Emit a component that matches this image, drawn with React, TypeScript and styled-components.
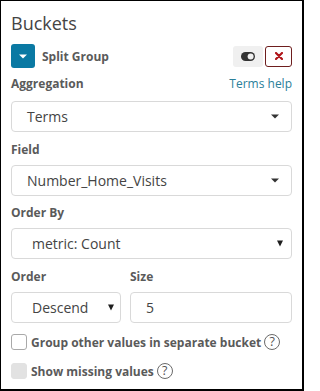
import React from "react";
import styled, { createGlobalStyle } from "styled-components";

const GlobalStyle = createGlobalStyle`
  html, body {
    margin: 0;
    padding: 0;
    background: #fff;
  }
  body {
    font-family: "Open Sans", "Liberation Sans", sans-serif;
  }
`;

const Frame = styled.div`
  box-sizing: border-box;
  width: 304px;
  height: 391px;
  border-style: solid;
  border-color: #000;
  border-width: 1px 2px 2px 1px;
  padding: 10px 10px 0 10px;
  background: #fff;
  color: #444;
`;

const Title = styled.h2`
  margin: 0 0 9px 0;
  font-size: 18px;
  line-height: 24px;
  font-weight: 400;
  color: #444;
`;

const GroupHeader = styled.div`
  display: flex;
  align-items: center;
  height: 24px;
  margin-bottom: 8px;
`;

const CollapseButton = styled.button`
  width: 24px;
  height: 24px;
  padding: 0;
  margin-right: 7px;
  border: 0;
  border-radius: 3px;
  background: #0a79a3;
  display: flex;
  align-items: center;
  justify-content: center;
`;

const GroupName = styled.span`
  flex: 1;
  font-size: 12px;
  font-weight: 700;
  color: #5a5a5a;
`;

const HeaderActions = styled.div`
  display: flex;
  gap: 2px;
`;

const ToggleButton = styled.button`
  width: 30px;
  height: 21px;
  padding: 0;
  border: 0;
  border-radius: 3px;
  background: #f0f0f0;
  display: flex;
  align-items: center;
  justify-content: center;
`;

const DeleteButton = styled.button`
  box-sizing: border-box;
  width: 27px;
  height: 21px;
  padding: 0;
  border: 1px solid #6e1e1e;
  border-radius: 3px;
  background: #fff;
  display: flex;
  align-items: center;
  justify-content: center;
`;

const LabelRow = styled.div`
  display: flex;
  justify-content: space-between;
  align-items: baseline;
  margin-bottom: 9px;
`;

const Label = styled.div<{ $gap?: number }>`
  font-size: 12px;
  font-weight: 700;
  line-height: 16px;
  color: #5a5a5a;
  margin-bottom: ${(p) => p.$gap ?? 7}px;
`;

const HelpLink = styled.a`
  font-size: 12px;
  line-height: 16px;
  color: #2b8099;
  text-decoration: none;
`;

const FieldGroup = styled.div`
  margin-bottom: 9.5px;
`;

const SelectBox = styled.div<{ $indent: number; $right: number }>`
  box-sizing: border-box;
  height: 31px;
  display: flex;
  align-items: center;
  padding: 0 ${(p) => p.$right}px 0 ${(p) => p.$indent}px;
  border: 1px solid #d9d9d9;
  border-radius: 4px;
  background: #fff;
  font-size: 14px;
  color: #444;
`;

const SelectText = styled.span`
  flex: 1;
  white-space: nowrap;
`;

const InputBox = styled.div`
  box-sizing: border-box;
  height: 31px;
  display: flex;
  align-items: center;
  padding: 0 15px;
  border: 1px solid #d9d9d9;
  border-radius: 4px;
  font-size: 14px;
  color: #444;
`;

const SplitRow = styled.div`
  display: grid;
  grid-template-columns: 110px 1fr;
  column-gap: 9px;
  margin-bottom: 11.5px;
`;

const CheckRow = styled.label`
  display: flex;
  align-items: center;
  height: 16px;
  margin-bottom: 13px;
  font-size: 12px;
  font-weight: 700;
  color: #5a5a5a;
`;

const CheckBox = styled.span<{ $disabled?: boolean }>`
  box-sizing: border-box;
  width: 16px;
  height: 16px;
  margin-right: 4px;
  border-radius: 3px;
  border: 1px solid ${(p) => (p.$disabled ? "#e2e2e2" : "#a9a9a9")};
  background: ${(p) => (p.$disabled ? "#e2e2e2" : "#fff")};
`;

const HelpIcon = styled.span`
  box-sizing: border-box;
  width: 16px;
  height: 16px;
  margin-left: 3px;
  border: 1px solid #6a6a6a;
  border-radius: 50%;
  display: inline-flex;
  align-items: center;
  justify-content: center;
  font-size: 12.5px;
  font-weight: 400;
  line-height: 1;
  color: #555;
`;

function SmallCaret({ color }: { color: string }) {
  return (
    <svg width="8" height="5" viewBox="0 0 8 5">
      <path d="M0 0.5 L8 0.5 L4 4.5 Z" fill={color} />
    </svg>
  );
}

function NativeCaret() {
  return (
    <svg width="6" height="7" viewBox="0 0 6 7">
      <path d="M0 0.5 L6 0.5 L3 6.5 Z" fill="#1e1e1e" />
    </svg>
  );
}

function ToggleIcon() {
  return (
    <svg width="14" height="9" viewBox="0 0 14 9">
      <rect x="0" y="0" width="14" height="9" rx="4.5" fill="#333" />
      <circle cx="9.6" cy="4.5" r="3" fill="#f0f0f0" />
    </svg>
  );
}

function CrossIcon() {
  return (
    <svg width="8" height="8" viewBox="0 0 8 8">
      <path
        d="M1 1 L7 7 M7 1 L1 7"
        stroke="#b0161b"
        strokeWidth="2.2"
        strokeLinecap="round"
      />
    </svg>
  );
}

export default function App() {
  return (
    <>
      <GlobalStyle />
      <Frame>
        <Title>Buckets</Title>

        <GroupHeader>
          <CollapseButton aria-label="Collapse">
            <SmallCaret color="#fff" />
          </CollapseButton>
          <GroupName>Split Group</GroupName>
          <HeaderActions>
            <ToggleButton aria-label="Toggle">
              <ToggleIcon />
            </ToggleButton>
            <DeleteButton aria-label="Remove">
              <CrossIcon />
            </DeleteButton>
          </HeaderActions>
        </GroupHeader>

        <FieldGroup>
          <LabelRow>
            <Label $gap={0}>Aggregation</Label>
            <HelpLink href="#">Terms help</HelpLink>
          </LabelRow>
          <SelectBox $indent={15} $right={12}>
            <SelectText>Terms</SelectText>
            <SmallCaret color="#333" />
          </SelectBox>
        </FieldGroup>

        <FieldGroup>
          <Label>Field</Label>
          <SelectBox $indent={15} $right={12}>
            <SelectText>Number_Home_Visits</SelectText>
            <SmallCaret color="#333" />
          </SelectBox>
        </FieldGroup>

        <FieldGroup>
          <Label>Order By</Label>
          <SelectBox $indent={20} $right={8}>
            <SelectText>metric: Count</SelectText>
            <NativeCaret />
          </SelectBox>
        </FieldGroup>

        <SplitRow>
          <div>
            <Label>Order</Label>
            <SelectBox $indent={20} $right={6}>
              <SelectText>Descend</SelectText>
              <NativeCaret />
            </SelectBox>
          </div>
          <div>
            <Label>Size</Label>
            <InputBox>5</InputBox>
          </div>
        </SplitRow>

        <CheckRow>
          <CheckBox />
          Group other values in separate bucket
          <HelpIcon>?</HelpIcon>
        </CheckRow>
        <CheckRow>
          <CheckBox $disabled />
          Show missing values
          <HelpIcon>?</HelpIcon>
        </CheckRow>
      </Frame>
    </>
  );
}
